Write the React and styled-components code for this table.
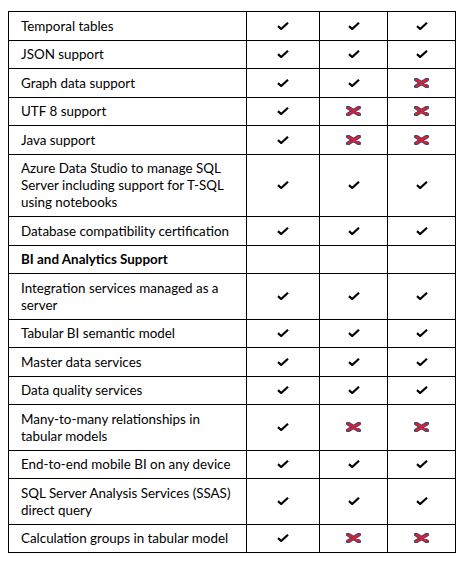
import React from "react";
import styled, { createGlobalStyle } from "styled-components";

const GlobalStyle = createGlobalStyle`
  html, body {
    margin: 0;
    padding: 0;
    background: #ffffff;
  }
  body {
    font-family: "Lato", "Open Sans", sans-serif;
    color: #000;
  }
`;

const Page = styled.div`
  width: 469px;
  height: 566px;
  padding: 11px 0 0 8px;
  box-sizing: border-box;
`;

const Table = styled.table`
  border-collapse: collapse;
  table-layout: fixed;
  width: 448px;
`;

const Col = styled.col`
  width: ${({ $w }) => $w}px;
`;

const Cell = styled.td`
  border: 1px solid #000;
  padding: 5.5px 0 5px 12px;
  font-size: 13.4px;
  line-height: 17px;
  white-space: nowrap;
  font-weight: ${({ $bold }) => ($bold ? 700 : 400)};
  vertical-align: middle;
`;

const MarkCell = styled.td`
  border: 1px solid #000;
  padding: 0;
  text-align: center;
  vertical-align: middle;
  line-height: 0;
`;

const Check = () => (
  <svg width="12" height="8" viewBox="0 0 12 8">
    <path
      d="M1 4.2 L4.2 7 L11 0.8"
      fill="none"
      stroke="#000"
      strokeWidth="2.2"
      strokeLinejoin="miter"
    />
  </svg>
);

const Cross = () => (
  <svg width="15" height="10" viewBox="0 0 15 10">
    <path
      d="M2 1.5 L13 8.5 M13 1.5 L2 8.5"
      stroke="#3b4677"
      strokeWidth="4"
      strokeLinecap="round"
    />
    <path
      d="M2.3 1.8 L12.7 8.2 M12.7 1.8 L2.3 8.2"
      stroke="#ee1c24"
      strokeWidth="2"
      strokeLinecap="round"
    />
  </svg>
);

const rows = [
  { label: ["Temporal tables"], marks: [1, 1, 1] },
  { label: ["JSON support"], marks: [1, 1, 1] },
  { label: ["Graph data support"], marks: [1, 1, 0] },
  { label: ["UTF 8 support"], marks: [1, 0, 0] },
  { label: ["Java support"], marks: [1, 0, 0] },
  {
    label: [
      "Azure Data Studio to manage SQL",
      "Server including support for T-SQL",
      "using notebooks",
    ],
    marks: [1, 1, 1],
  },
  { label: ["Database compatibility certification"], marks: [1, 1, 1] },
  { label: ["BI and Analytics Support"], heading: true },
  { label: ["Integration services managed as a", "server"], marks: [1, 1, 1] },
  { label: ["Tabular BI semantic model"], marks: [1, 1, 1] },
  { label: ["Master data services"], marks: [1, 1, 1] },
  { label: ["Data quality services"], marks: [1, 1, 1] },
  {
    label: ["Many-to-many relationships in", "tabular models"],
    marks: [1, 0, 0],
  },
  { label: ["End-to-end mobile BI on any device"], marks: [1, 1, 1] },
  {
    label: ["SQL Server Analysis Services (SSAS)", "direct query"],
    marks: [1, 1, 1],
  },
  { label: ["Calculation groups in tabular model"], marks: [1, 0, 0] },
];

export default function App() {
  return (
    <>
      <GlobalStyle />
      <Page>
        <Table>
          <colgroup>
            <Col $w={238} />
            <Col $w={73} />
            <Col $w={68} />
            <Col $w={68} />
          </colgroup>
          <tbody>
            {rows.map((row, i) => (
              <tr key={i}>
                <Cell $bold={row.heading}>
                  {row.label.map((line, j) => (
                    <React.Fragment key={j}>
                      {j > 0 && <br />}
                      {line}
                    </React.Fragment>
                  ))}
                </Cell>
                {(row.marks || [null, null, null]).map((m, j) => (
                  <MarkCell key={j}>
                    {m === 1 && <Check />}
                    {m === 0 && <Cross />}
                  </MarkCell>
                ))}
              </tr>
            ))}
          </tbody>
        </Table>
      </Page>
    </>
  );
}
